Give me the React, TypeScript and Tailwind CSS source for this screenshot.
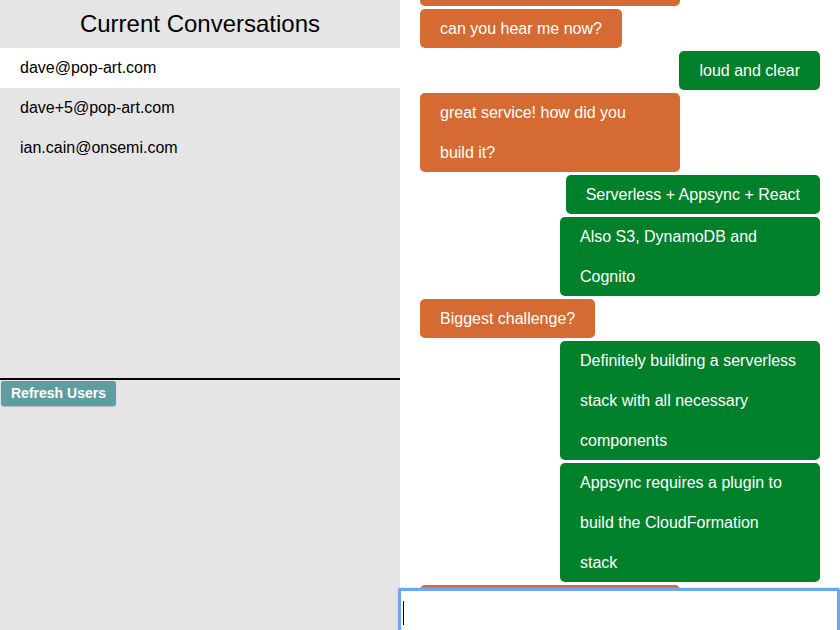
import { useState } from 'react';

type Msg = { from: 'them' | 'me'; text: string };

const USERS = ['dave@pop-art.com', 'dave+5@pop-art.com', 'ian.cain@onsemi.com'];

const MESSAGES: Msg[] = [
  { from: 'them', text: 'hello there, anybody out' },
  { from: 'them', text: 'can you hear me now?' },
  { from: 'me', text: 'loud and clear' },
  { from: 'them', text: 'great service! how did you build it?' },
  { from: 'me', text: 'Serverless + Appsync + React' },
  { from: 'me', text: 'Also S3, DynamoDB and Cognito' },
  { from: 'them', text: 'Biggest challenge?' },
  { from: 'me', text: 'Definitely building a serverless stack with all necessary components' },
  { from: 'me', text: 'Appsync requires a plugin to build the CloudFormation stack' },
  { from: 'them', text: 'Thanks for the tour of the app' },
];

export default function App() {
  const [selected, setSelected] = useState(USERS[0]);
  const [draft, setDraft] = useState('');

  return (
    <div className="flex h-[630px] w-[840px] overflow-hidden bg-white font-['Liberation_Sans',Arial,sans-serif]">
      {/* Sidebar */}
      <div className="flex w-[400px] shrink-0 flex-col bg-[#e5e5e5]">
        <div className="flex h-[378px] flex-col">
          <h2 className="h-[48px] text-center text-[24px] leading-[48px] text-black">Current Conversations</h2>
          {USERS.map(u => (
            <div
              key={u}
              onClick={() => setSelected(u)}
              className={`h-[40px] cursor-pointer pl-5 text-[16px] leading-[40px] text-black ${
                selected === u ? 'bg-white' : ''
              }`}
            >
              {u}
            </div>
          ))}
        </div>
        <div className="h-[2px] bg-black" />
        <div className="pl-px pt-px">
          <button className="h-[25px] rounded-[3px] bg-[#5f9ea0] px-[10px] text-[14px] font-bold text-white shadow-[0_1px_1px_rgba(0,0,0,0.2)]">
            Refresh Users
          </button>
        </div>
      </div>

      {/* Chat */}
      <div className="relative flex flex-1 flex-col">
        <div className="flex-1 overflow-hidden">
          <div className="-mt-[33px] flex flex-col gap-[3px] px-5">
            {MESSAGES.map((m, i) => (
              <div
                key={i}
                className={`max-w-[260px] rounded-[5px] px-5 text-[16px] leading-[40px] text-white ${
                  m.from === 'me' ? 'self-end bg-[#00802a]' : 'self-start bg-[#d56a33]'
                } ${i === 0 || i === MESSAGES.length - 1 ? 'w-[260px]' : ''}`}
              >
                <div className="-mb-px">{m.text}</div>
              </div>
            ))}
          </div>
        </div>
        <textarea
          value={draft}
          onChange={e => setDraft(e.target.value)}
          autoFocus
          className="absolute bottom-[-10px] left-[-2px] h-[52px] w-[442px] resize-none rounded-[2px] border-[3px] border-[#6ea6ef] bg-white px-[2px] py-[8px] text-[16px] outline-none shadow-[0_0_2px_#9cc3f5]"
        />
        {/* caret */}
        <div className="pointer-events-none absolute bottom-[5px] left-[3px] h-[24px] w-px bg-black" />
      </div>
    </div>
  );
}
